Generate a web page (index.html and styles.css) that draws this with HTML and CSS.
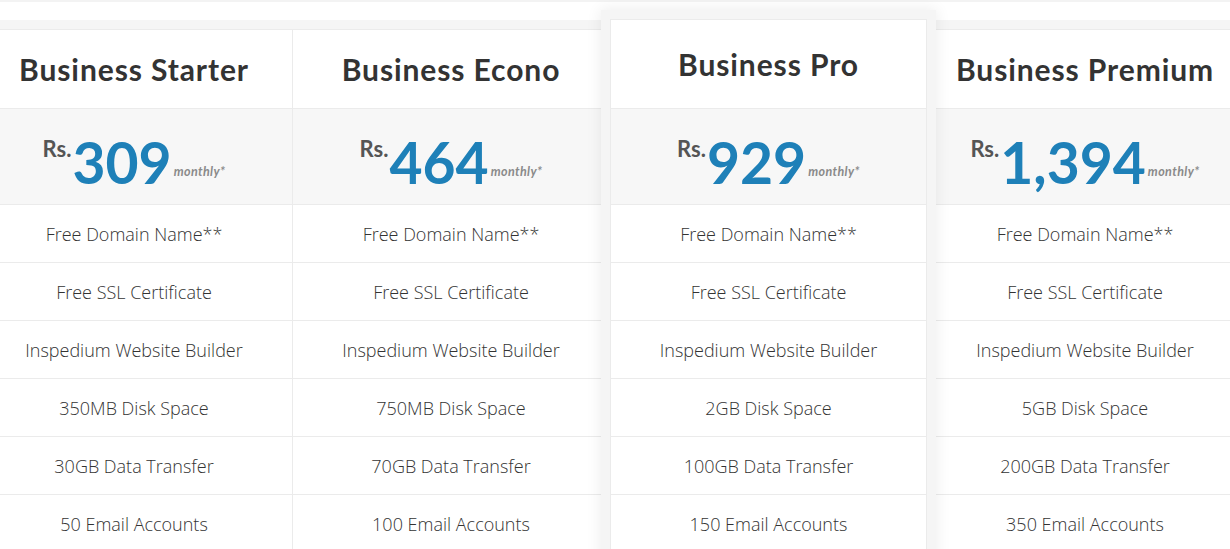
FILE: index.html
```html
<!DOCTYPE html>
<html>
<head>
<meta charset="utf-8">
<link rel="stylesheet" href="styles.css">
</head>
<body>
<div class="page">
  <div class="topline"></div>
  <div class="band"></div>
  <div class="table">
    <div class="col">
      <div class="cell head"><h2>Business Starter</h2></div>
      <div class="cell price"><span class="cur">Rs.</span><span class="amt">309</span><span class="per">monthly*</span></div>
      <div class="cell feat">Free Domain Name**</div>
      <div class="cell feat">Free SSL Certificate</div>
      <div class="cell feat">Inspedium Website Builder</div>
      <div class="cell feat">350MB Disk Space</div>
      <div class="cell feat">30GB Data Transfer</div>
      <div class="cell feat">50 Email Accounts</div>
    </div>
    <div class="col">
      <div class="cell head"><h2>Business Econo</h2></div>
      <div class="cell price"><span class="cur">Rs.</span><span class="amt">464</span><span class="per">monthly*</span></div>
      <div class="cell feat">Free Domain Name**</div>
      <div class="cell feat">Free SSL Certificate</div>
      <div class="cell feat">Inspedium Website Builder</div>
      <div class="cell feat">750MB Disk Space</div>
      <div class="cell feat">70GB Data Transfer</div>
      <div class="cell feat">100 Email Accounts</div>
    </div>
    <div class="col featured">
      <div class="cell head"><h2>Business Pro</h2></div>
      <div class="cell price"><span class="cur">Rs.</span><span class="amt">929</span><span class="per">monthly*</span></div>
      <div class="cell feat">Free Domain Name**</div>
      <div class="cell feat">Free SSL Certificate</div>
      <div class="cell feat">Inspedium Website Builder</div>
      <div class="cell feat">2GB Disk Space</div>
      <div class="cell feat">100GB Data Transfer</div>
      <div class="cell feat">150 Email Accounts</div>
    </div>
    <div class="col">
      <div class="cell head"><h2>Business Premium</h2></div>
      <div class="cell price"><span class="cur">Rs.</span><span class="amt">1,394</span><span class="per">monthly*</span></div>
      <div class="cell feat">Free Domain Name**</div>
      <div class="cell feat">Free SSL Certificate</div>
      <div class="cell feat">Inspedium Website Builder</div>
      <div class="cell feat">5GB Disk Space</div>
      <div class="cell feat">200GB Data Transfer</div>
      <div class="cell feat">350 Email Accounts</div>
    </div>
  </div>
</div>
</body>
</html>
```

FILE: styles.css
```css
html, body {
  margin: 0;
  padding: 0;
  background: #fff;
  overflow: hidden;
  width: 1230px;
  height: 549px;
}

.page {
  width: 1230px;
  height: 549px;
  overflow: hidden;
}

.topline {
  height: 2px;
  background: #f3f3f3;
  margin-bottom: 18px;
}

.band {
  height: 9px;
  background: #f5f5f5;
}

.table {
  display: flex;
  margin-left: -24px;
  border-top: 1px solid #ebebeb;
}

.col {
  flex: 0 0 317px;
  width: 317px;
  box-sizing: border-box;
  border-right: 1px solid #ebebeb;
  display: flex;
  flex-direction: column;
  background: #fff;
}

.cell {
  box-sizing: border-box;
  display: flex;
  align-items: center;
  justify-content: center;
  border-bottom: 1px solid #ebebeb;
}

.head {
  height: 79px;
}

.head h2 {
  margin: 0;
  font-family: "Lato", "Open Sans", sans-serif;
  font-weight: 700;
  font-size: 30px;
  color: #333;
  letter-spacing: 0.9px;
}

.price {
  height: 96px;
  background: #f7f7f7;
  align-items: flex-end;
  padding-bottom: 20px;
}

.cur {
  font-family: "Lato", sans-serif;
  font-weight: 700;
  font-size: 22px;
  color: #555;
  align-self: flex-start;
  margin-top: 26px;
  margin-right: 1px;
}

.amt {
  font-family: "Lato", sans-serif;
  font-weight: 700;
  font-size: 57px;
  line-height: 44px;
  color: #1e80b8;
  letter-spacing: 0;
}

.per {
  font-family: "Lato", sans-serif;
  font-style: italic;
  font-weight: 700;
  font-size: 12.5px;
  color: #8a8a8a;
  margin-left: 2px;
  margin-bottom: 5px;
  letter-spacing: 0.4px;
}

.feat {
  height: 58px;
  font-family: "Open Sans", sans-serif;
  font-weight: 300;
  font-size: 18px;
  color: #333;
}

.featured {
  position: relative;
  z-index: 2;
  margin-top: -11px;
  border-left: 1px solid #ebebeb;
  border-top: 1px solid #ebebeb;
  box-shadow: 0 0 0 9px #f5f5f5, 0 0 14px 10px rgba(0, 0, 0, 0.07);
}

.featured .head {
  height: 89px;
}
```
